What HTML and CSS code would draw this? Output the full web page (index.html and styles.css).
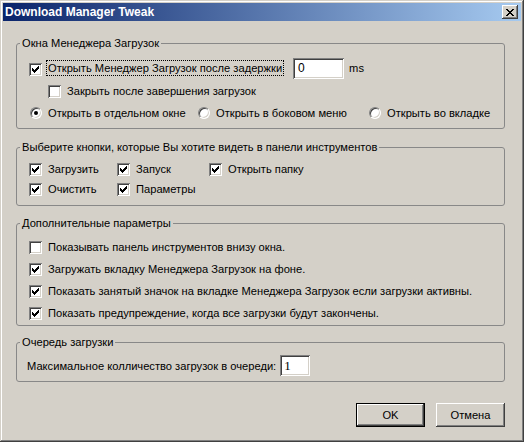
FILE: index.html
```html
<!DOCTYPE html>
<html lang="ru">
<head>
<meta charset="utf-8">
<title>Download Manager Tweak</title>
<link rel="stylesheet" href="styles.css">
</head>
<body>
<div class="window">
  <div class="titlebar">
    <span class="title">Download Manager Tweak</span>
    <span class="close" aria-label="Закрыть">
      <svg width="8" height="7" viewBox="0 0 8 7"><path fill="#000" d="M0 0h2v1H0zM6 0h2v1H6zM1 1h2v1H1zM5 1h2v1H5zM2 2h4v1H2zM3 3h2v1H3zM2 4h4v1H2zM1 5h2v1H1zM5 5h2v1H5zM0 6h2v1H0zM6 6h2v1H6z"/></svg>
    </span>
  </div>

  <div class="content">
    <fieldset class="group g-windows">
      <legend>Окна Менеджера Загрузок</legend>
      <div class="row row-delay">
        <span class="check"><span class="box checked"></span><span class="focus">Открыть Менеджер Загрузок после задержки</span></span>
        <span class="field field-ms">0</span>
        <span class="unit">ms</span>
      </div>
      <div class="row row-indent">
        <span class="check"><span class="box"></span><span>Закрыть после завершения загрузок</span></span>
      </div>
      <div class="row row-radios">
        <span class="radio r1"><span class="dot on"></span><span>Открыть в отдельном окне</span></span>
        <span class="radio r2"><span class="dot"></span><span>Открыть в боковом меню</span></span>
        <span class="radio r3"><span class="dot"></span><span>Открыть во вкладке</span></span>
      </div>
    </fieldset>

    <fieldset class="group g-buttons">
      <legend>Выберите кнопки, которые Вы хотите видеть в панели инструментов</legend>
      <div class="grid">
        <span class="check"><span class="box checked"></span><span>Загрузить</span></span>
        <span class="check"><span class="box checked"></span><span>Запуск</span></span>
        <span class="check"><span class="box checked"></span><span>Открыть папку</span></span>
        <span class="check"><span class="box checked"></span><span>Очистить</span></span>
        <span class="check"><span class="box checked"></span><span>Параметры</span></span>
      </div>
    </fieldset>

    <fieldset class="group g-extra">
      <legend>Дополнительные параметры</legend>
      <div class="row row-list">
        <span class="check"><span class="box"></span><span>Показывать панель инструментов внизу окна.</span></span>
      </div>
      <div class="row row-list">
        <span class="check"><span class="box checked"></span><span>Загружать вкладку Менеджера Загрузок на фоне.</span></span>
      </div>
      <div class="row row-list">
        <span class="check"><span class="box checked"></span><span>Показать занятый значок на вкладке Менеджера Загрузок если загрузки активны.</span></span>
      </div>
      <div class="row row-list">
        <span class="check"><span class="box checked"></span><span>Показать предупреждение, когда все загрузки будут закончены.</span></span>
      </div>
    </fieldset>

    <fieldset class="group g-queue">
      <legend>Очередь загрузки</legend>
      <div class="row row-queue">
        <span>Максимальное колличество загрузок в очереди:</span>
        <span class="field field-queue">1</span>
      </div>
    </fieldset>

    <div class="actions">
      <span class="btn btn-default">OK</span>
      <span class="btn">Отмена</span>
    </div>
  </div>
</div>
</body>
</html>
```

FILE: styles.css
```css
html, body {
  margin: 0;
  padding: 0;
  background: #d4d0c8;
}

/* Classic raised dialog frame */
.window {
  width: 524px;
  height: 442px;
  box-sizing: border-box;
  padding: 3px;
  background: #d4d0c8;
  box-shadow:
    inset -1px -1px #404040,
    inset 1px 1px #d4d0c8,
    inset -2px -2px #808080,
    inset 2px 2px #ffffff;
  font-family: "Liberation Sans", Arial, sans-serif;
  font-size: 11.15px;
  color: #000;
}

.titlebar {
  height: 18px;
  display: flex;
  align-items: center;
  justify-content: space-between;
  padding: 0 3px 0 2px;
  background: linear-gradient(to right, #0a246a, #a6caf0);
}

.title {
  color: #fff;
  font-weight: bold;
  font-size: 12px;
  line-height: 18px;
}

.close {
  width: 16px;
  height: 14px;
  display: flex;
  align-items: center;
  justify-content: center;
  background: #d4d0c8;
  box-shadow:
    inset -1px -1px #404040,
    inset 1px 1px #ffffff,
    inset -2px -2px #808080,
    inset 2px 2px #d4d0c8;
}

.close svg {
  display: block;
  margin-left: -1px;
}

.content {
  padding: 16px 0 0 13px;
}

/* Group boxes */
.group {
  width: 489px;
  box-sizing: border-box;
  min-inline-size: 0;
  margin: 0;
  padding: 0 0 0 12px;
  border: 1px solid #888888;
  border-radius: 3px;
}

.group legend {
  margin-left: -9px;
  padding: 0 2px;
  line-height: 13px;
}

.row {
  display: flex;
  align-items: center;
}

/* Checkbox: sunken white well */
.check {
  display: inline-flex;
  align-items: center;
  gap: 6px;
  white-space: nowrap;
}

.box {
  width: 13px;
  height: 13px;
  flex: none;
  box-sizing: border-box;
  background: #fff;
  box-shadow:
    inset 1px 1px #808080,
    inset -1px -1px #ffffff,
    inset 2px 2px #404040,
    inset -2px -2px #d4d0c8;
}

.box.checked {
  background:
    url("data:image/svg+xml,%3Csvg xmlns='http://www.w3.org/2000/svg' width='13' height='13'%3E%3Cpath d='M3 5h1v3H3zM4 6h1v3H4zM5 7h1v3H5zM6 6h1v3H6zM7 5h1v3H7zM8 4h1v3H8zM9 3h1v3H9z' fill='%23000'/%3E%3C/svg%3E") no-repeat,
    #fff;
}

.focus {
  outline: 1px dotted #000;
  outline-offset: 0;
  padding: 0 1px;
  margin-left: -1px;
  line-height: 14px;
}

/* Radio: sunken round well */
.radio {
  display: inline-flex;
  align-items: center;
  gap: 6px;
  white-space: nowrap;
}

.dot {
  width: 12px;
  height: 12px;
  flex: none;
  box-sizing: border-box;
  border-radius: 50%;
  background: #fff;
  border: 1px solid;
  border-color: #808080 #ffffff #ffffff #808080;
  box-shadow: inset 1px 1px #404040, inset -1px -1px #d4d0c8;
  display: flex;
  align-items: center;
  justify-content: center;
}

.dot.on::after {
  content: "";
  width: 4px;
  height: 4px;
  border-radius: 50%;
  background: #000;
}

/* Sunken edit field */
.field {
  box-sizing: border-box;
  height: 21px;
  background: #fff;
  padding: 0 5px;
  line-height: 21px;
  box-shadow:
    inset 1px 1px #808080,
    inset -1px -1px #ffffff,
    inset 2px 2px #404040,
    inset -2px -2px #d4d0c8;
}

/* Group 1 */
.g-windows {
  padding-bottom: 4px;
}

.row-delay {
  margin-top: 7px;
  height: 22px;
}

.row-delay .box {
  margin-top: 2px;
}

.field-ms {
  width: 51px;
  margin-left: 10px;
  font-size: 12px;
}

.unit {
  margin-left: 5px;
}

.row-indent {
  margin-top: 1px;
  height: 22px;
  padding-left: 19px;
}

.row-radios {
  height: 22px;
  padding-left: 1px;
}

.r1 { width: 168px; }
.r2 { width: 171px; }

/* Group 2 */
.g-buttons {
  margin-top: 12px;
  padding-bottom: 6px;
}

.grid {
  margin-top: 5px;
  display: grid;
  grid-template-columns: 88px 92px auto;
  grid-auto-rows: 20px;
  align-items: center;
}

/* Group 3 */
.g-extra {
  margin-top: 11px;
  padding-bottom: 1px;
}

.g-extra legend + .row {
  margin-top: 6px;
}

.row-list {
  height: 22px;
}

/* Group 4 */
.g-queue {
  margin-top: 10px;
  padding-left: 10px;
  padding-bottom: 5px;
}

.g-queue legend {
  margin-left: -7px;
}

.row-queue {
  margin-top: 6px;
  height: 21px;
  gap: 4px;
}

.field-queue {
  width: 30px;
  font-family: "Liberation Serif", "Times New Roman", serif;
  font-size: 13px;
  padding-left: 4px;
}

/* Dialog buttons */
.actions {
  width: 489px;
  margin-top: 21px;
  display: flex;
  justify-content: flex-end;
  gap: 11px;
}

.btn {
  width: 69px;
  height: 24px;
  box-sizing: border-box;
  display: flex;
  align-items: center;
  justify-content: center;
  background: #d4d0c8;
  box-shadow:
    inset -1px -1px #404040,
    inset 1px 1px #ffffff,
    inset -2px -2px #808080,
    inset 2px 2px #d4d0c8;
}

.btn-default {
  box-shadow:
    inset 0 0 0 1px #000,
    inset -2px -2px #404040,
    inset 2px 2px #ffffff,
    inset -3px -3px #808080;
}
```
